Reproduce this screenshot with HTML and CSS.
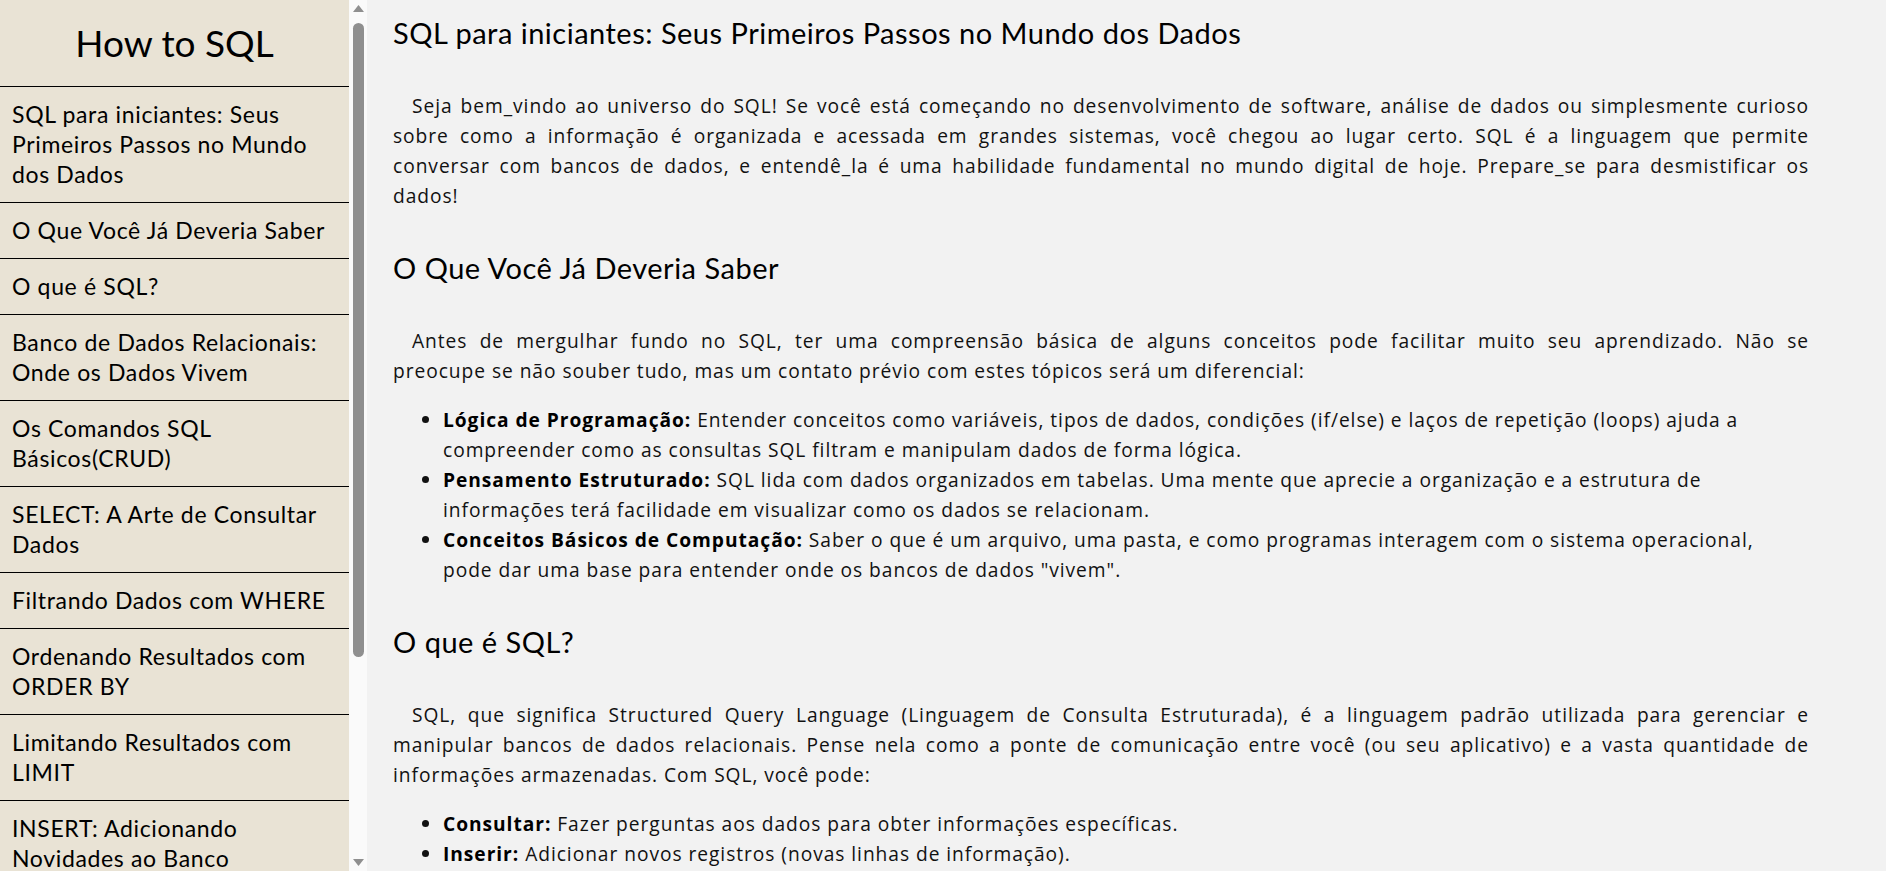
FILE: index.html
```html
<!DOCTYPE html>
<html lang="pt-BR">
<head>
<meta charset="utf-8">
<title>How to SQL</title>
<link rel="stylesheet" href="styles.css">
</head>
<body>
<div class="app">
  <aside class="sidebar">
    <div class="sidebar-scroll">
      <header class="brand"><h2 class="brand-title">How to SQL</h2></header>
      <nav class="nav">
        <a class="nav-item" href="#s1">SQL para iniciantes: Seus Primeiros Passos no Mundo dos Dados</a>
        <a class="nav-item" href="#s2">O Que Você Já Deveria Saber</a>
        <a class="nav-item" href="#s3">O que é SQL?</a>
        <a class="nav-item" href="#s4">Banco de Dados Relacionais: Onde os Dados Vivem</a>
        <a class="nav-item" href="#s5">Os Comandos SQL Básicos(CRUD)</a>
        <a class="nav-item" href="#s6">SELECT: A Arte de Consultar Dados</a>
        <a class="nav-item" href="#s7">Filtrando Dados com WHERE</a>
        <a class="nav-item" href="#s8">Ordenando Resultados com ORDER BY</a>
        <a class="nav-item" href="#s9">Limitando Resultados com LIMIT</a>
        <a class="nav-item" href="#s10">INSERT: Adicionando Novidades ao Banco</a>
        <a class="nav-item" href="#s11">UPDATE: Modificando Dados Existentes</a>
        <a class="nav-item" href="#s12">DELETE: Removendo Dados com Cuidado</a>
        <a class="nav-item" href="#s13">Próximos Passos: Continue Aprendendo</a>
      </nav>
    </div>
    <div class="scrollbar" aria-hidden="true">
      <div class="sb-btn">
        <svg width="11" height="7" viewBox="0 0 11 7"><polygon points="5.5,0 11,7 0,7" fill="#8f8f8f"/></svg>
      </div>
      <div class="sb-track"><div class="sb-thumb"></div></div>
      <div class="sb-btn">
        <svg width="11" height="7" viewBox="0 0 11 7"><polygon points="0,0 11,0 5.5,7" fill="#8f8f8f"/></svg>
      </div>
    </div>
  </aside>
  <main class="content">
    <section class="section" id="s1">
      <h1 class="title">SQL para iniciantes: Seus Primeiros Passos no Mundo dos Dados</h1>
      <p class="text"><span class="ln">Seja bem_vindo ao universo do SQL! Se você está começando no desenvolvimento de software, análise de dados ou simplesmente curioso</span><span class="ln">sobre como a informação é organizada e acessada em grandes sistemas, você chegou ao lugar certo. SQL é a linguagem que permite</span><span class="ln">conversar com bancos de dados, e entendê_la é uma habilidade fundamental no mundo digital de hoje. Prepare_se para desmistificar os</span><span class="ln">dados!</span></p>
    </section>
    <section class="section" id="s2">
      <h2 class="title">O Que Você Já Deveria Saber</h2>
      <p class="text"><span class="ln">Antes de mergulhar fundo no SQL, ter uma compreensão básica de alguns conceitos pode facilitar muito seu aprendizado. Não se</span><span class="ln">preocupe se não souber tudo, mas um contato prévio com estes tópicos será um diferencial:</span></p>
      <ul class="list">
        <li><strong>Lógica de Programação:</strong> Entender conceitos como variáveis, tipos de dados, condições (if/else) e laços de repetição (loops) ajuda a compreender como as consultas SQL filtram e manipulam dados de forma lógica.</li>
        <li><strong>Pensamento Estruturado:</strong> SQL lida com dados organizados em tabelas. Uma mente que aprecie a organização e a estrutura de informações terá facilidade em visualizar como os dados se relacionam.</li>
        <li><strong>Conceitos Básicos de Computação:</strong> Saber o que é um arquivo, uma pasta, e como programas interagem com o sistema operacional, pode dar uma base para entender onde os bancos de dados "vivem".</li>
      </ul>
    </section>
    <section class="section" id="s3">
      <h2 class="title">O que é SQL?</h2>
      <p class="text"><span class="ln">SQL, que significa Structured Query Language (Linguagem de Consulta Estruturada), é a linguagem padrão utilizada para gerenciar e</span><span class="ln">manipular bancos de dados relacionais. Pense nela como a ponte de comunicação entre você (ou seu aplicativo) e a vasta quantidade de</span><span class="ln">informações armazenadas. Com SQL, você pode:</span></p>
      <ul class="list">
        <li><strong>Consultar:</strong> Fazer perguntas aos dados para obter informações específicas.</li>
        <li><strong>Inserir:</strong> Adicionar novos registros (novas linhas de informação).</li>
        <li><strong>Atualizar:</strong> Modificar registros existentes.</li>
        <li><strong>Excluir:</strong> Remover registros que não são mais necessários.</li>
      </ul>
    </section>
  </main>
</div>
</body>
</html>
```

FILE: styles.css
```css
* { box-sizing: border-box; }

html, body {
  margin: 0;
  padding: 0;
  height: 100%;
}

body {
  background: #f2f2f2;
  color: #000;
  font-family: "Open Sans", "Liberation Sans", sans-serif;
}

.app {
  display: flex;
  height: 100vh;
  overflow: hidden;
}

/* ---------- sidebar ---------- */
.sidebar {
  flex: 0 0 367px;
  display: flex;
  height: 100vh;
}

.sidebar-scroll {
  flex: 0 0 349px;
  width: 349px;
  height: 100vh;
  overflow: hidden;
  background: #e9e3d5;
}

.scrollbar {
  flex: 0 0 18px;
  display: flex;
  flex-direction: column;
  background: #fafafa;
}

.sb-btn {
  height: 17px;
  display: flex;
  align-items: center;
  justify-content: center;
}

.sb-btn svg {
  display: block;
}

.sb-track {
  flex: 1 1 auto;
  padding: 6px 3px 0 4px;
}

.sb-thumb {
  height: 634px;
  background: #8f8f8f;
  border-radius: 6px;
}

.brand {
  height: 87px;
  display: flex;
  align-items: center;
  justify-content: center;
  border-bottom: 1px solid #000;
}

.brand-title {
  margin: 0;
  font-family: "Lato", "Liberation Sans", sans-serif;
  font-weight: 400;
  font-size: 37px;
  line-height: 46px;
}

.nav {
  display: flex;
  flex-direction: column;
}

.nav-item {
  display: block;
  padding: 12px 12px 13px;
  border-bottom: 1px solid #000;
  color: #000;
  text-decoration: none;
  font-family: "Lato", "Liberation Sans", sans-serif;
  font-size: 23px;
  letter-spacing: 0.65px;
  line-height: 30px;
}

/* ---------- content ---------- */
.content {
  flex: 1 1 auto;
  height: 100vh;
  overflow: hidden;
  padding: 15px 77px 0 26px;
  background: #f2f2f2;
}

.section {
  display: flow-root;
}

.title {
  font-family: "Lato", "Liberation Sans", sans-serif;
  font-weight: 400;
  font-size: 29px;
  letter-spacing: 0.5px;
  line-height: 36px;
  margin: 20px 0 40px;
}

.section:first-child .title {
  margin-top: 0;
}

.text {
  font-size: 19.2px;
  letter-spacing: 0.95px;
  line-height: 30px;
  margin: 19px 0;
  color: #111;
}

.ln {
  display: block;
  text-align: justify;
  text-align-last: justify;
  text-indent: 0;
}

.ln:first-child {
  text-indent: 19px;
}

.ln:last-child {
  text-align-last: left;
}

.section > .text:first-of-type {
  margin-top: 0;
}

.list {
  margin: 19px 0;
  padding-left: 50px;
  font-size: 19.2px;
  letter-spacing: 0.95px;
  line-height: 30px;
  color: #111;
}

.list strong {
  font-weight: 700;
  color: #000;
}
```
